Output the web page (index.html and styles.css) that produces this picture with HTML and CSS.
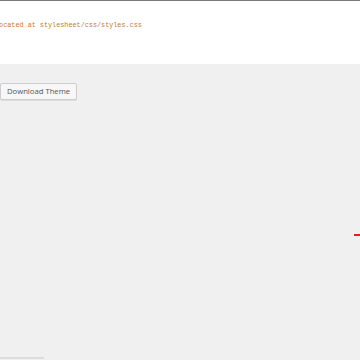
FILE: index.html
```html
<!DOCTYPE html>
<html>
<head>
<title>Theme Export</title>
<link rel="stylesheet" href="styles.css">
</head>
<body>

<div class="notice">
  <code class="path">Located at stylesheet/css/styles.css</code>
</div>

<div class="actions">
  <button class="btn">Download Theme</button>
</div>

<div class="canvas"></div>

<span class="marker"></span>

<div class="footer">
  <div class="footer-bar"></div>
</div>

</body>
</html>
```

FILE: styles.css
```css
body {
  margin: 0;
  background: #f0f0f0;
  font-family: "Open Sans", "Liberation Sans", sans-serif;
  height: 360px;
  overflow: hidden;
  display: flex;
  flex-direction: column;
  position: relative;
}
.notice {
  background: #fff;
  border-top: 1px solid #7a7a7a;
  height: 64px;
  box-sizing: border-box;
  padding-top: 20px;
}
.path {
  display: block;
  margin-left: -5px;
  font-family: "Liberation Mono", monospace;
  font-size: 6.8px;
  color: #c27a3c;
  white-space: nowrap;
}
.actions {
  display: flex;
  padding-top: 19px;
}
.btn {
  font-family: "Open Sans", "Liberation Sans", sans-serif;
  font-size: 7.7px;
  color: #555;
  background: #f7f7f7;
  border: 1px solid #cccccc;
  border-radius: 2px;
  box-shadow: 0 1px 0 #ddd;
  padding: 0 6px;
  height: 17px;
  line-height: 15px;
  cursor: pointer;
}
.canvas {
  flex: 1;
}
.marker {
  position: absolute;
  right: 0;
  top: 234px;
  width: 6px;
  height: 2px;
  background: #e02020;
}
.footer {
  height: 3px;
}
.footer-bar {
  width: 44px;
  height: 2px;
  background: #dcdcdc;
}
```
